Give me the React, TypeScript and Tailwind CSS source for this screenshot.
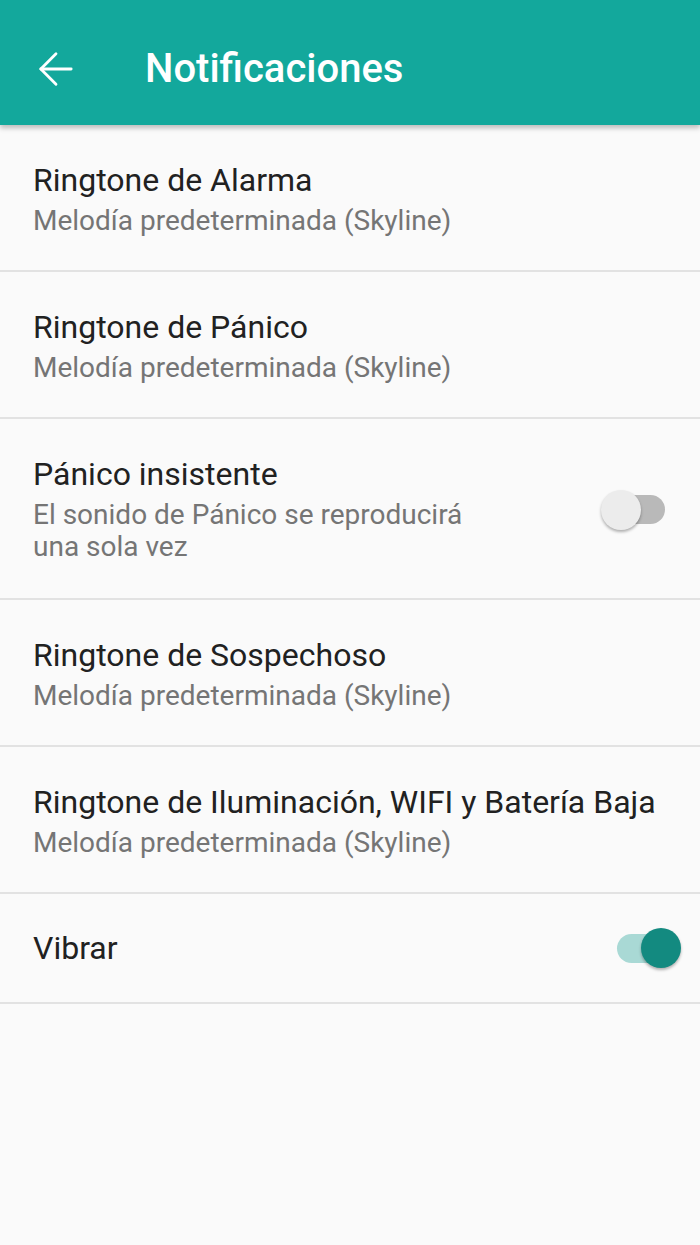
import { ArrowLeft } from "lucide-react";

interface RowProps {
  title: string;
  subtitle?: string;
  toggle?: "on" | "off";
  tall?: boolean;
}

function Toggle({ on }: { on: boolean }) {
  return (
    <div className="relative w-[80px] h-[40px] flex items-center justify-center">
      <div className={`w-[48px] h-[29px] rounded-full ${on ? "bg-[#a9d9d5]" : "bg-[#b9b9b9]"}`} />
      <div
        className={`absolute top-0 size-[40px] rounded-full shadow-[0_2px_3px_rgba(0,0,0,0.3)] ${on ? "right-0 bg-[#138a80]" : "left-0 bg-[#ececec]"}`}
      />
    </div>
  );
}

function Row({ title, subtitle, toggle, tall }: RowProps) {
  return (
    <div className={`flex items-center justify-between pl-[33px] pr-[19px] pt-[37px] border-b-2 border-[#e2e2e2] ${tall ? "pb-[35px]" : "pb-[33px]"}`}>
      <div className="flex flex-col">
        <div className="text-[32px] leading-[36px] text-[#212121]">{title}</div>
        {subtitle && (
          <div className="mt-[7px] text-[28px] leading-[32px] text-[#757575] max-w-[450px]">{subtitle}</div>
        )}
      </div>
      {toggle && <Toggle on={toggle === "on"} />}
    </div>
  );
}

export default function App() {
  return (
    <div className="min-h-[1245px] bg-[#fafafa] font-['Roboto',sans-serif]">
      <div className="relative z-10 h-[125px] bg-[#13a89c] flex items-center shadow-[0_3px_5px_rgba(0,0,0,0.25)]">
        <div className="w-[145px] pl-[30px] pt-[12px]">
          <ArrowLeft size={52} strokeWidth={1.3} color="white" />
        </div>
        <div className="text-[40px] font-medium text-white pt-[12px]">Notificaciones</div>
      </div>
      <Row title="Ringtone de Alarma" subtitle="Melodía predeterminada (Skyline)" />
      <Row title="Ringtone de Pánico" subtitle="Melodía predeterminada (Skyline)" />
      <Row title="Pánico insistente" subtitle="El sonido de Pánico se reproducirá una sola vez" toggle="off" tall />
      <Row title="Ringtone de Sospechoso" subtitle="Melodía predeterminada (Skyline)" />
      <Row title="Ringtone de Iluminación, WIFI y Batería Baja" subtitle="Melodía predeterminada (Skyline)" />
      <div className="flex items-center justify-between pl-[33px] pr-[19px] h-[110px] border-b-2 border-[#e2e2e2]">
        <div className="text-[32px] leading-[36px] text-[#212121]">Vibrar</div>
        <Toggle on />
      </div>
    </div>
  );
}
